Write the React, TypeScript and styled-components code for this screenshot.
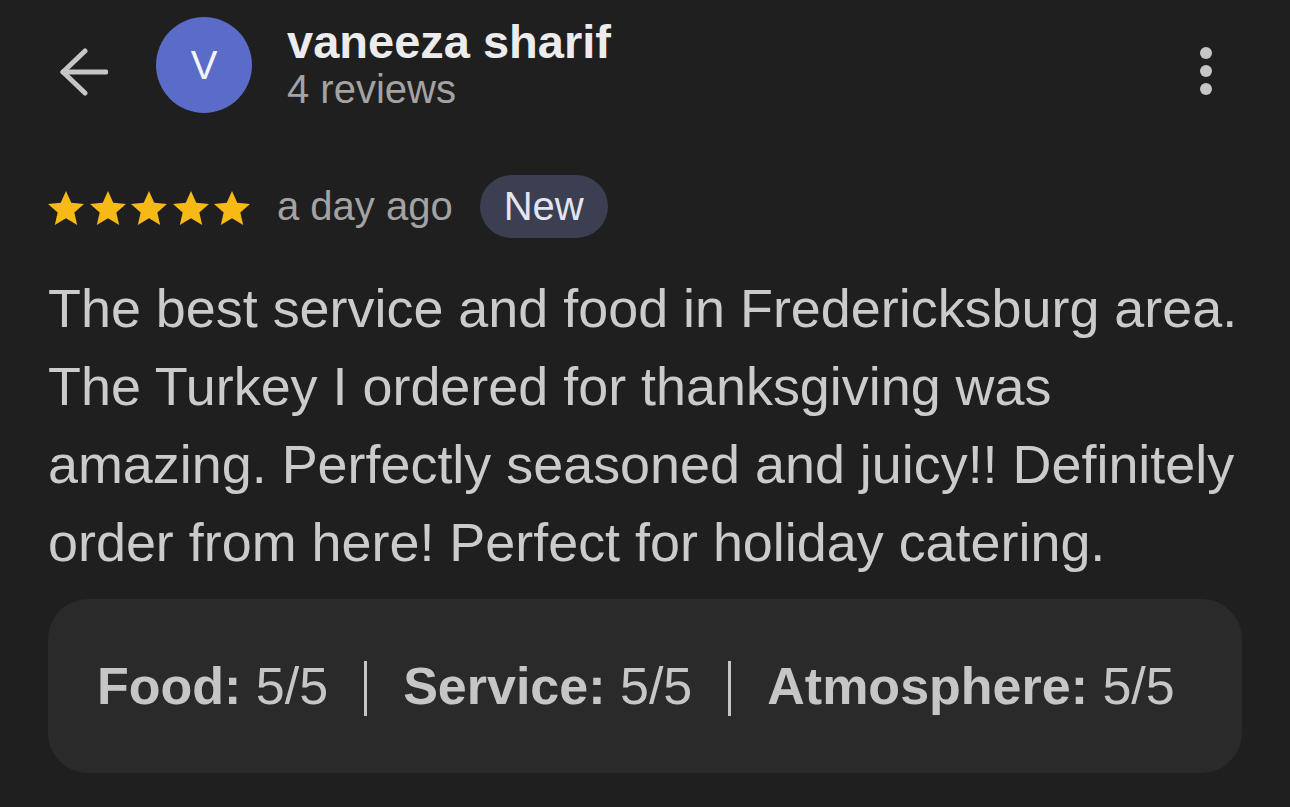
import styled, { createGlobalStyle } from 'styled-components'

const GlobalStyle = createGlobalStyle`
  html, body {
    margin: 0;
    padding: 0;
    background: #1f1f1f;
  }
  body {
    font-family: "Liberation Sans", Arial, sans-serif;
  }
`

const Page = styled.div`
  width: 1290px;
  height: 807px;
  box-sizing: border-box;
  padding: 17px 48px 0 48px;
  background: #1f1f1f;
  overflow: hidden;
`

const Header = styled.header`
  display: flex;
  align-items: center;
  height: 96px;
`

const BackButton = styled.button`
  width: 48px;
  height: 48px;
  margin: 14px 0 0 12px;
  padding: 0;
  border: none;
  background: none;
  display: flex;
  align-items: center;
  justify-content: center;
  color: #c6c6c8;
`

const Avatar = styled.div`
  width: 96px;
  height: 96px;
  margin-left: 48px;
  border-radius: 50%;
  background: #5b6bc8;
  color: #f4f5fb;
  font-size: 40px;
  display: flex;
  align-items: center;
  justify-content: center;
`

const Who = styled.div`
  display: flex;
  flex-direction: column;
  margin-left: 35px;
  flex: 1;
  margin-top: -3px;
`

const Name = styled.div`
  font-size: 47px;
  font-weight: 700;
  color: #ececec;
  line-height: 50px;
`

const Meta = styled.div`
  font-size: 40px;
  color: #a3a3a3;
  line-height: 44px;
`

const MenuButton = styled.button`
  width: 24px;
  height: 60px;
  margin: 12px 24px 0 0;
  padding: 0;
  border: none;
  background: none;
  display: flex;
  flex-direction: column;
  align-items: center;
  justify-content: center;
  gap: 6px;
`

const Dot = styled.span`
  width: 12px;
  height: 12px;
  border-radius: 50%;
  background: #c6c6c8;
`

const RatingRow = styled.div`
  display: flex;
  align-items: center;
  margin-top: 62px;
  height: 63px;
`

const Stars = styled.div`
  display: flex;
  gap: 5.5px;
  margin-top: 2px;
`

const When = styled.span`
  font-size: 40px;
  color: #a3a3a3;
  margin-left: 27px;
`

const Pill = styled.span`
  margin-left: 27px;
  height: 63px;
  padding: 0 24px;
  border-radius: 32px;
  background: #3c3f51;
  color: #e3e5f0;
  font-size: 40px;
  display: flex;
  align-items: center;
`

const Body = styled.p`
  margin: 31px 0 0 0;
  font-size: 53.9px;
  line-height: 78px;
  color: #cbcbcb;
`

const Breakdown = styled.div`
  margin-top: 18px;
  height: 174px;
  width: 1194px;
  box-sizing: border-box;
  border-radius: 40px;
  background: #2a2a2b;
  padding-left: 49px;
  display: flex;
  align-items: center;
  font-size: 52px;
  color: #c6c6c6;
`

const Item = styled.span`
  white-space: nowrap;
`

const Label = styled.b`
  font-weight: 700;
`

const Sep = styled.span`
  width: 3px;
  height: 55px;
  margin: 4px 36px 0 36px;
  background: #c6c6c6;
`

function Star() {
  return (
    <svg width="36" height="34" viewBox="1.4 1.2 21.2 20">
      <path
        d="M12 1.2l3.1 6.9 7.5.7-5.7 5 1.7 7.4L12 17.3l-6.6 3.9 1.7-7.4-5.7-5 7.5-.7z"
        fill="#f7b916"
      />
    </svg>
  )
}

const scores = [
  { label: 'Food', value: '5/5' },
  { label: 'Service', value: '5/5' },
  { label: 'Atmosphere', value: '5/5' },
]

export default function App() {
  return (
    <Page>
      <GlobalStyle />
      <Header>
        <BackButton aria-label="Back">
          <svg width="48" height="48" viewBox="0 0 48 48" fill="none" stroke="currentColor" strokeWidth="5" strokeLinecap="round" strokeLinejoin="round">
            <path d="M46 24H3" />
            <path d="M25 3L3 24l22 21" />
          </svg>
        </BackButton>
        <Avatar>V</Avatar>
        <Who>
          <Name>vaneeza sharif</Name>
          <Meta>4 reviews</Meta>
        </Who>
        <MenuButton aria-label="More">
          <Dot />
          <Dot />
          <Dot />
        </MenuButton>
      </Header>

      <RatingRow>
        <Stars>
          {[0, 1, 2, 3, 4].map((i) => (
            <Star key={i} />
          ))}
        </Stars>
        <When>a day ago</When>
        <Pill>New</Pill>
      </RatingRow>

      <Body>
        The best service and food in Fredericksburg area. The Turkey I ordered for thanksgiving was
        amazing. Perfectly seasoned and juicy!! Definitely order from here! Perfect for holiday catering.
      </Body>

      <Breakdown>
        {scores.map((s, i) => (
          <>
            {i > 0 && <Sep key={`sep-${s.label}`} />}
            <Item key={s.label}>
              <Label>{s.label}:</Label> {s.value}
            </Item>
          </>
        ))}
      </Breakdown>
    </Page>
  )
}
